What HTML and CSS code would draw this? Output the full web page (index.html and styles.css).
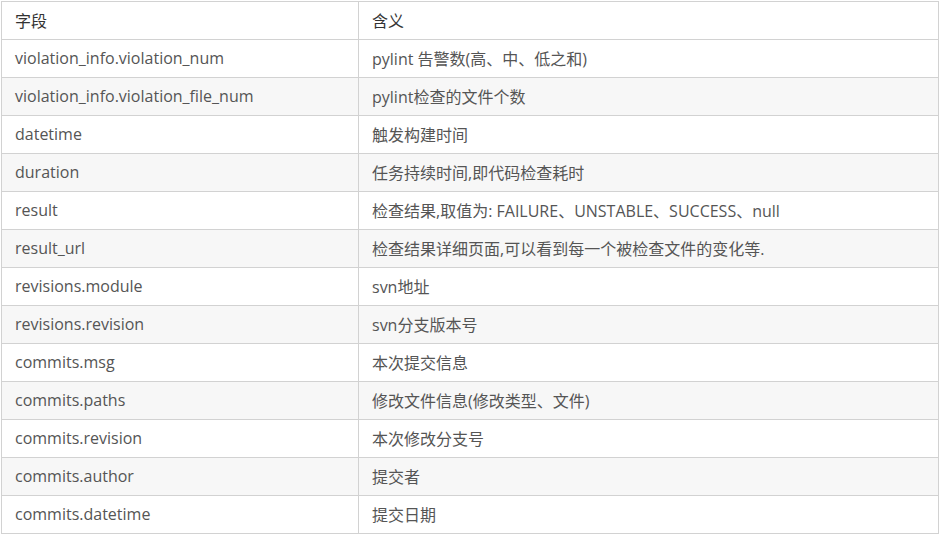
FILE: index.html
```html
<!DOCTYPE html>
<html lang="zh">
<head>
<meta charset="utf-8">
<link rel="stylesheet" href="styles.css">
</head>
<body>
<table class="fields">
  <thead>
    <tr><th class="col-key">字段</th><th>含义</th></tr>
  </thead>
  <tbody>
    <tr><td>violation_info.violation_num</td><td>pylint 告警数(高、中、低之和)</td></tr>
    <tr><td>violation_info.violation_file_num</td><td>pylint检查的文件个数</td></tr>
    <tr><td>datetime</td><td>触发构建时间</td></tr>
    <tr><td>duration</td><td>任务持续时间,即代码检查耗时</td></tr>
    <tr><td>result</td><td>检查结果,取值为: FAILURE、UNSTABLE、SUCCESS、null</td></tr>
    <tr><td>result_url</td><td>检查结果详细页面,可以看到每一个被检查文件的变化等.</td></tr>
    <tr><td>revisions.module</td><td>svn地址</td></tr>
    <tr><td>revisions.revision</td><td>svn分支版本号</td></tr>
    <tr><td>commits.msg</td><td>本次提交信息</td></tr>
    <tr><td>commits.paths</td><td>修改文件信息(修改类型、文件)</td></tr>
    <tr><td>commits.revision</td><td>本次修改分支号</td></tr>
    <tr><td>commits.author</td><td>提交者</td></tr>
    <tr><td>commits.datetime</td><td>提交日期</td></tr>
  </tbody>
</table>
</body>
</html>
```
FILE: styles.css
```css
html, body {
  margin: 0;
  padding: 0;
  background: #fff;
}
body {
  padding: 1px 0 0 1px;
  font-family: "Open Sans", "Noto Sans CJK SC", sans-serif;
  font-size: 16px;
  color: #555;
}
.fields {
  border-collapse: collapse;
  width: 938px;
  table-layout: fixed;
}
.fields th,
.fields td {
  border: 1px solid #d2d2d2;
  height: 38px;
  padding: 0 13px 2px;
  text-align: left;
  vertical-align: middle;
  box-sizing: border-box;
  white-space: nowrap;
}
.fields th {
  font-weight: normal;
  color: #333;
}
.col-key {
  width: 357px;
}
.fields tbody tr:nth-child(even) {
  background: #f7f7f7;
}
```
